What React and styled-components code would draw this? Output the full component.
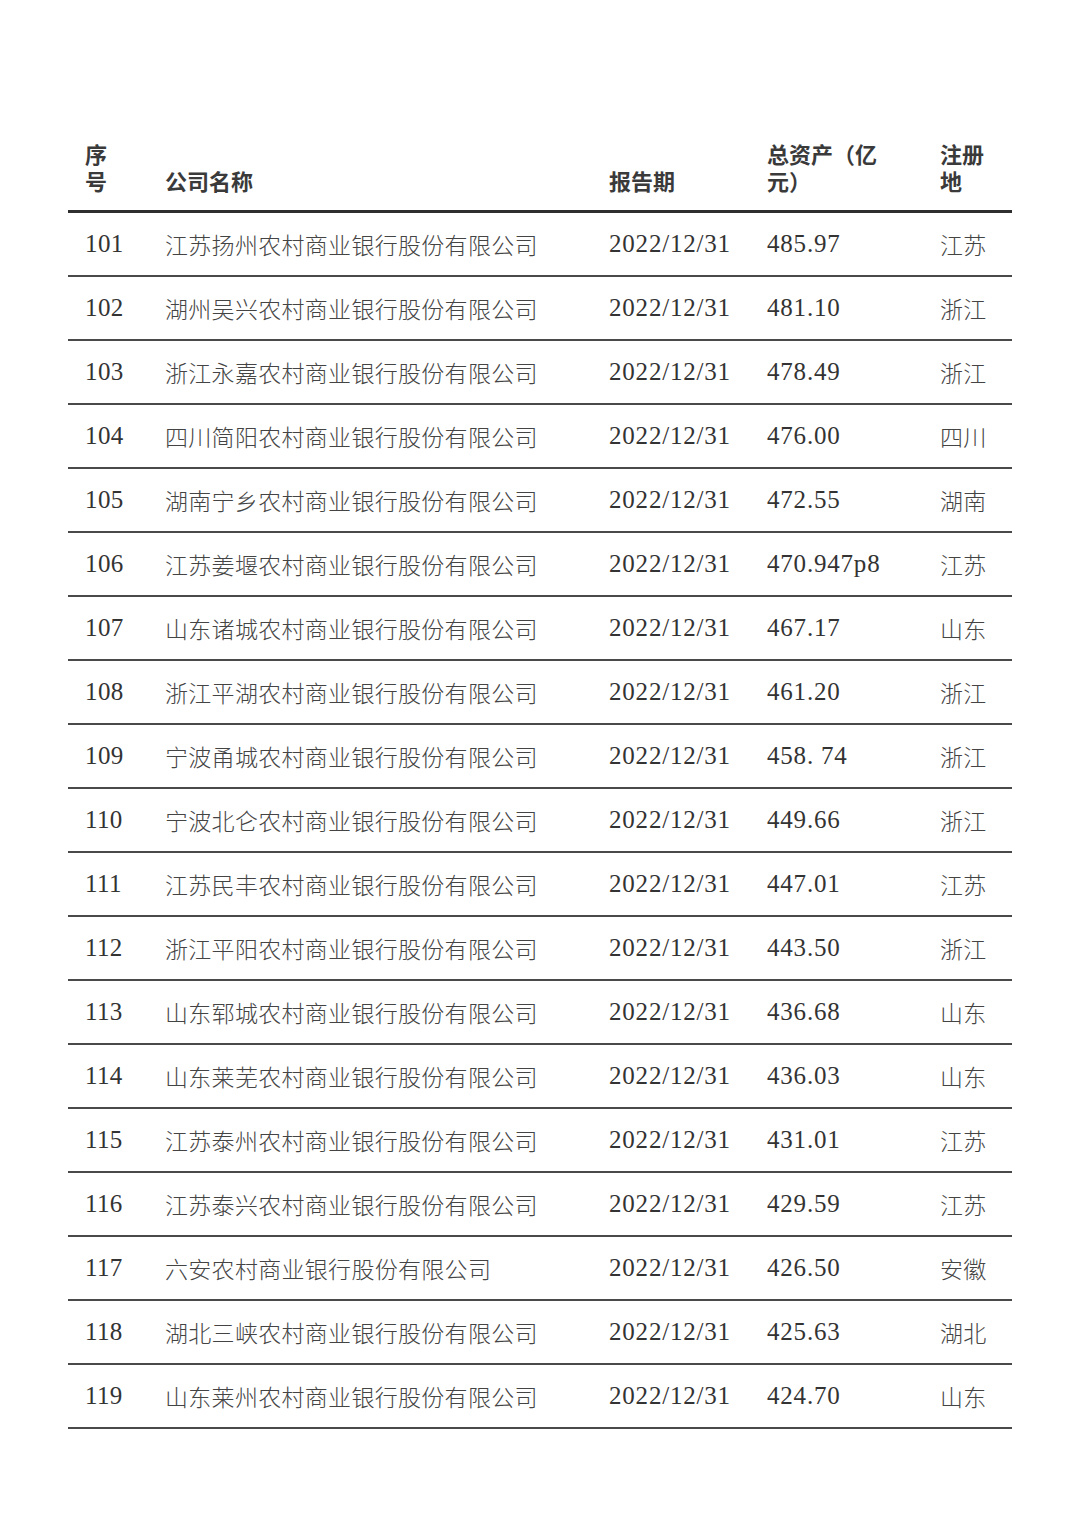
import React from "react";
import styled, { createGlobalStyle } from "styled-components";

const rows = [
  ["101", "江苏扬州农村商业银行股份有限公司", "485.97", "江苏"],
  ["102", "湖州吴兴农村商业银行股份有限公司", "481.10", "浙江"],
  ["103", "浙江永嘉农村商业银行股份有限公司", "478.49", "浙江"],
  ["104", "四川简阳农村商业银行股份有限公司", "476.00", "四川"],
  ["105", "湖南宁乡农村商业银行股份有限公司", "472.55", "湖南"],
  ["106", "江苏姜堰农村商业银行股份有限公司", "470.947p8", "江苏"],
  ["107", "山东诸城农村商业银行股份有限公司", "467.17", "山东"],
  ["108", "浙江平湖农村商业银行股份有限公司", "461.20", "浙江"],
  ["109", "宁波甬城农村商业银行股份有限公司", "458. 74", "浙江"],
  ["110", "宁波北仑农村商业银行股份有限公司", "449.66", "浙江"],
  ["111", "江苏民丰农村商业银行股份有限公司", "447.01", "江苏"],
  ["112", "浙江平阳农村商业银行股份有限公司", "443.50", "浙江"],
  ["113", "山东郓城农村商业银行股份有限公司", "436.68", "山东"],
  ["114", "山东莱芜农村商业银行股份有限公司", "436.03", "山东"],
  ["115", "江苏泰州农村商业银行股份有限公司", "431.01", "江苏"],
  ["116", "江苏泰兴农村商业银行股份有限公司", "429.59", "江苏"],
  ["117", "六安农村商业银行股份有限公司", "426.50", "安徽"],
  ["118", "湖北三峡农村商业银行股份有限公司", "425.63", "湖北"],
  ["119", "山东莱州农村商业银行股份有限公司", "424.70", "山东"],
];

const GlobalStyle = createGlobalStyle`
  html, body {
    margin: 0;
    padding: 0;
    background: #ffffff;
  }
  body {
    width: 1080px;
    height: 1528px;
    font-family: "Noto Sans CJK SC", sans-serif;
    color: #333333;
  }
`;

const Page = styled.div`
  padding: 140px 68px 0 68px;
`;

const Grid = styled.div`
  display: grid;
  grid-template-columns: 97px 444px 158px 173px 1fr;
  width: 944px;
`;

const HeadRow = styled(Grid)`
  align-items: end;
  border-bottom: 3px solid #2f2f2f;
  padding-bottom: 16px;
`;

const HeadCell = styled.div`
  font-family: "Noto Sans CJK SC", sans-serif;
  font-weight: 700;
  font-size: 22px;
  line-height: 27px;
  color: #3a3a3a;
  padding-left: ${(p) => (p.$first ? "17px" : "0")};
  white-space: pre-line;
`;

const BodyRow = styled(Grid)`
  height: 62px;
  align-items: center;
  border-bottom: 2px solid #4a4a4a;
  &:first-of-type {
    height: 63px;
  }
`;

const NumCell = styled.div`
  font-family: "Liberation Serif", serif;
  font-size: 25px;
  letter-spacing: ${(p) => (p.$wide ? "0.8px" : "0.4px")};
  color: #333333;
  padding-left: ${(p) => (p.$first ? "17px" : "0")};
  white-space: pre;
`;

const TextCell = styled.div`
  font-family: "Noto Sans CJK SC", sans-serif;
  font-weight: 300;
  font-size: 23px;
  letter-spacing: 0.3px;
  color: #444444;
`;

export default function App() {
  return (
    <>
      <GlobalStyle />
      <Page>
        <HeadRow>
          <HeadCell $first>{"序\n号"}</HeadCell>
          <HeadCell>公司名称</HeadCell>
          <HeadCell>报告期</HeadCell>
          <HeadCell>{"总资产（亿\n元）"}</HeadCell>
          <HeadCell>{"注册\n地"}</HeadCell>
        </HeadRow>
        {rows.map(([no, name, assets, place]) => (
          <BodyRow key={no}>
            <NumCell $first>{no}</NumCell>
            <TextCell>{name}</TextCell>
            <NumCell $wide>2022/12/31</NumCell>
            <NumCell $wide>{assets}</NumCell>
            <TextCell>{place}</TextCell>
          </BodyRow>
        ))}
      </Page>
    </>
  );
}
